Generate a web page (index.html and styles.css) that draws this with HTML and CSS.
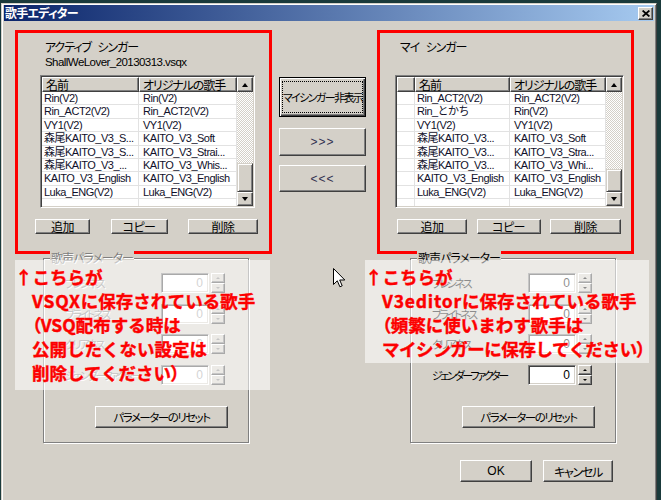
FILE: index.html
```html
<!DOCTYPE html>
<html lang="ja">
<head>
<meta charset="utf-8">
<title>歌手エディター</title>
<link rel="stylesheet" href="styles.css">
</head>
<body>
<div class="window">
  <div class="titlebar">
    <span class="title">歌手エディター</span>
    <span class="close"><svg width="8" height="7" viewBox="0 0 8 7"><path d="M0.6 0.5 L7.4 6.5 M7.4 0.5 L0.6 6.5" stroke="#000" stroke-width="1.7"/></svg></span>
  </div>
  <div class="content">
    <div class="top">
      <section class="panel panel-left">
        <div class="plabel">アクティブ シンガー</div>
        <div class="pfile">ShallWeLover_20130313.vsqx</div>
        <div class="list list-left">
          <div class="cols">
            <div class="hrow"><div class="hcell c1">名前</div><div class="hcell c2">オリジナルの歌手</div></div>
            <div class="row"><div class="cell c1">Rin(V2)</div><div class="cell c2">Rin(V2)</div></div>
            <div class="row"><div class="cell c1">Rin_ACT2(V2)</div><div class="cell c2">Rin_ACT2(V2)</div></div>
            <div class="row"><div class="cell c1">VY1(V2)</div><div class="cell c2">VY1(V2)</div></div>
            <div class="row"><div class="cell c1">森尾KAITO_V3_S...</div><div class="cell c2">KAITO_V3_Soft</div></div>
            <div class="row"><div class="cell c1">森尾KAITO_V3_S...</div><div class="cell c2">KAITO_V3_Strai...</div></div>
            <div class="row"><div class="cell c1">森尾KAITO_V3_...</div><div class="cell c2">KAITO_V3_Whis...</div></div>
            <div class="row"><div class="cell c1">KAITO_V3_English</div><div class="cell c2">KAITO_V3_English</div></div>
            <div class="row"><div class="cell c1">Luka_ENG(V2)</div><div class="cell c2">Luka_ENG(V2)</div></div>
            <div class="row"><div class="cell c1"></div><div class="cell c2"></div></div>
          </div>
          <div class="vscroll">
            <div class="sbtn"><i class="tri-up"></i></div>
            <div class="track"></div>
            <div class="thumb thumb-left"></div>
            <div class="sbtn sdown"><i class="tri-down"></i></div>
          </div>
        </div>
        <div class="brow">
          <div class="btn bl1">追加</div>
          <div class="btn bl2">コピー</div>
          <div class="btn bl3">削除</div>
        </div>
      </section>

      <div class="mid">
        <div class="btn btn-default"><span class="focus">マイシンガー非表示</span></div>
        <div class="btn btn-move1">&gt;&gt;&gt;</div>
        <div class="btn btn-move2">&lt;&lt;&lt;</div>
      </div>

      <section class="panel panel-right">
        <div class="plabel">マイ シンガー</div>
        <div class="pfile"></div>
        <div class="list list-right">
          <div class="cols">
            <div class="hrow"><div class="hcell c0"></div><div class="hcell c1">名前</div><div class="hcell c2">オリジナルの歌手</div></div>
            <div class="row"><div class="cell c0"></div><div class="cell c1">Rin_ACT2(V2)</div><div class="cell c2">Rin_ACT2(V2)</div></div>
            <div class="row"><div class="cell c0"></div><div class="cell c1">Rin_とかち</div><div class="cell c2">Rin(V2)</div></div>
            <div class="row"><div class="cell c0"></div><div class="cell c1">VY1(V2)</div><div class="cell c2">VY1(V2)</div></div>
            <div class="row"><div class="cell c0"></div><div class="cell c1">森尾KAITO_V3...</div><div class="cell c2">KAITO_V3_Soft</div></div>
            <div class="row"><div class="cell c0"></div><div class="cell c1">森尾KAITO_V3...</div><div class="cell c2">KAITO_V3_Stra...</div></div>
            <div class="row"><div class="cell c0"></div><div class="cell c1">森尾KAITO_V3...</div><div class="cell c2">KAITO_V3_Whi...</div></div>
            <div class="row"><div class="cell c0"></div><div class="cell c1">KAITO_V3_English</div><div class="cell c2">KAITO_V3_English</div></div>
            <div class="row"><div class="cell c0"></div><div class="cell c1">Luka_ENG(V2)</div><div class="cell c2">Luka_ENG(V2)</div></div>
            <div class="row"><div class="cell c0"></div><div class="cell c1"></div><div class="cell c2"></div></div>
          </div>
          <div class="vscroll">
            <div class="sbtn"><i class="tri-up"></i></div>
            <div class="track"></div>
            <div class="thumb thumb-right"></div>
            <div class="sbtn sdown"><i class="tri-down"></i></div>
          </div>
        </div>
        <div class="brow brow-right">
          <div class="btn br1">追加</div>
          <div class="btn br2">コピー</div>
          <div class="btn br3">削除</div>
        </div>
      </section>
    </div>

    <div class="groups">
      <div class="group disabled">
        <span class="glabel">歌声パラメーター</span>
        <div class="prow"><span class="plab">ブレシネス</span><span class="num">0</span><span class="spin"><i class="su"></i><i class="sd"></i></span></div>
        <div class="prow"><span class="plab">ブライトネス</span><span class="num">0</span><span class="spin"><i class="su"></i><i class="sd"></i></span></div>
        <div class="prow"><span class="plab">クリアネス</span><span class="num">0</span><span class="spin"><i class="su"></i><i class="sd"></i></span></div>
        <div class="prow"><span class="plab">ジェンダーファクター</span><span class="num">0</span><span class="spin"><i class="su"></i><i class="sd"></i></span></div>
        <div class="btn reset">パラメーターのリセット</div>
      </div>
      <div class="group">
        <span class="glabel">歌声パラメーター</span>
        <div class="prow"><span class="plab">ブレシネス</span><span class="num">0</span><span class="spin"><i class="su"></i><i class="sd"></i></span></div>
        <div class="prow"><span class="plab">ブライトネス</span><span class="num">0</span><span class="spin"><i class="su"></i><i class="sd"></i></span></div>
        <div class="prow"><span class="plab">クリアネス</span><span class="num">0</span><span class="spin"><i class="su"></i><i class="sd"></i></span></div>
        <div class="prow"><span class="plab">ジェンダーファクター</span><span class="num">0</span><span class="spin"><i class="su"></i><i class="sd"></i></span></div>
        <div class="btn reset">パラメーターのリセット</div>
      </div>
    </div>

    <div class="foot">
      <div class="btn btn-ok">OK</div>
      <div class="btn btn-cancel">キャンセル</div>
    </div>
  </div>

  <div class="note note-left">
    <div class="nl">↑こちらが</div>
    <div class="nl ind"><span class="lat">VSQX</span>に保存されている歌手</div>
    <div class="nl ind"><span class="pp">（</span>VSQ配布する時は</div>
    <div class="nl ind">公開したくない設定は</div>
    <div class="nl ind">削除してください<span class="pp">）</span></div>
  </div>
  <div class="note note-right">
    <div class="nl">↑こちらが</div>
    <div class="nl ind"><span class="lat">V3editor</span>に保存されている歌手</div>
    <div class="nl ind"><span class="pp">（</span>頻繁に使いまわす歌手は</div>
    <div class="nl ind tight">マイシンガーに保存してください<span class="pp">）</span></div>
  </div>

  <svg class="cursor" width="13" height="20" viewBox="0 0 13 20"><path d="M0.5 0.5 V16.5 L4.3 12.8 L6.9 18.8 L9.2 17.8 L6.7 12 H11.8 Z" fill="#fff" stroke="#000" stroke-width="1" stroke-linejoin="miter"/></svg>
</div>
</body>
</html>
```
FILE: styles.css
```css
* { box-sizing: border-box; }
html, body { margin: 0; padding: 0; }
body {
  width: 661px;
  height: 500px;
  overflow: hidden;
  background: #1a3a3b;
  font-family: "Liberation Sans", "Noto Sans CJK JP", sans-serif;
  font-size: 12px;
  color: #000;
}

.window {
  position: relative;
  margin: 3px 0 0 1px;
  width: 656px;
  height: 510px;
  background: #d4d0c8;
  border: 1px solid;
  border-color: #d4d0c8 #404040 #404040 #d4d0c8;
  box-shadow: inset 1px 1px #fff, inset -1px -1px #808080;
  padding: 1px 2px 2px 2px;
}

/* title bar */
.titlebar {
  height: 16px;
  display: flex;
  align-items: center;
  justify-content: space-between;
  background: linear-gradient(90deg, #0a246a 0%, #a6caf0 100%);
  padding: 0 1px 0 1px;
}
.title {
  color: #fff;
  font-family: "Noto Sans CJK JP", sans-serif;
  font-weight: 700;
  font-size: 12px;
  line-height: 16px;
  letter-spacing: -0.8px;
  font-feature-settings: "palt";
}
.close {
  width: 15px;
  height: 13px;
  background: #d4d0c8;
  border: 1px solid;
  border-color: #fff #404040 #404040 #fff;
  box-shadow: inset -1px -1px #808080;
  display: flex;
  align-items: center;
  justify-content: center;
}

/* generic classic widgets */
.btn {
  background: #d4d0c8;
  border: 1px solid;
  border-color: #fff #404040 #404040 #fff;
  box-shadow: inset -1px -1px #808080;
  display: flex;
  align-items: center;
  justify-content: center;
  font-family: "Noto Sans CJK JP", sans-serif;
  font-feature-settings: "palt";
  font-size: 12px;
  letter-spacing: -0.6px;
  color: #000;
  white-space: nowrap;
}

.content { padding: 9px 0 0 11px; }
.top { display: flex; align-items: flex-start; }

.panel {
  width: 257px;
  height: 224px;
  border: 3px solid #fd0000;
  padding-top: 6px;
}
.plabel, .pfile {
  height: 15px;
  line-height: 15px;
  white-space: nowrap;
}
.plabel {
  font-family: "Noto Sans CJK JP", sans-serif;
  font-feature-settings: "palt";
  letter-spacing: -1.1px;
  word-spacing: 5px;
}
.pfile { margin-top: 1px; font-size: 11.5px; letter-spacing: -0.55px; }
.panel-left .plabel, .panel-left .pfile { margin-left: 27px; }
.panel-right .plabel { margin-left: 20px; }

/* list view */
.list {
  width: 215px;
  height: 133px;
  margin-top: 5px;
  display: flex;
  background: #fff;
  border: 1px solid;
  border-color: #808080 #fff #fff #808080;
  box-shadow: inset 1px 1px #404040, inset -1px -1px #d4d0c8;
  padding: 1px;
}
.list-left { margin-left: 22px; }
.list-right { margin-left: 15px; width: 229px; }
.cols { flex: 1; display: flex; flex-direction: column; overflow: hidden; }
.hrow { display: flex; height: 15px; flex: none; }
.hcell {
  background: #d4d0c8;
  border: 1px solid;
  border-color: #fff #404040 #404040 #fff;
  box-shadow: inset -1px -1px #808080;
  font-family: "Noto Sans CJK JP", sans-serif;
  font-feature-settings: "palt";
  letter-spacing: -1.1px;
  line-height: 13px;
  padding-left: 3px;
  white-space: nowrap;
  overflow: hidden;
}
.row { display: flex; height: 13.4px; flex: none; }
.cell {
  border-right: 1px solid #e2e2e2;
  border-bottom: 1px solid #e2e2e2;
  padding-left: 2px;
  font-size: 11px;
  letter-spacing: -0.5px;
  line-height: 12.4px;
  white-space: nowrap;
  overflow: hidden;
  color: #10102a;
}
.cell.c2 { padding-left: 4px; }
.list-left .c1 { width: 97px; }
.list-left .c2 { width: 98px; }
.list-right .c0 { width: 18px; }
.list-right .c1 { width: 95px; }
.list-right .c2 { width: 96px; }

.vscroll { width: 16px; display: flex; flex-direction: column; flex: none; }
.sbtn {
  height: 15px;
  background: #d4d0c8;
  border: 1px solid;
  border-color: #fff #404040 #404040 #fff;
  box-shadow: inset -1px -1px #808080;
  display: flex;
  align-items: center;
  justify-content: center;
  flex: none;
}
.sbtn.sdown { height: 14px; }
.tri-up, .tri-down { display: block; width: 0; height: 0; border-left: 3.5px solid transparent; border-right: 3.5px solid transparent; }
.tri-up { border-bottom: 4px solid #000; }
.tri-down { border-top: 4px solid #000; }
.track {
  flex: 1;
  background: repeating-conic-gradient(#ffffff 0 25%, #d4d0c8 0 50%) 0 0 / 2px 2px;
}
.thumb {
  flex: none;
  background: #d4d0c8;
  border: 1px solid;
  border-color: #d4d0c8 #404040 #404040 #d4d0c8;
  box-shadow: inset 1px 1px #fff, inset -1px -1px #808080;
}
.thumb-left { height: 29px; }
.thumb-right { height: 23px; }

.brow {
  display: flex;
  justify-content: space-between;
  margin: 11px 0 0 17px;
  width: 223px;
}
.brow-right { width: 224px; }
.brow .btn { height: 15px; }
.bl1 { width: 55px; }
.bl2 { width: 57px; }
.bl3 { width: 70px; }
.br1 { width: 70px; }
.br2 { width: 64px; }
.br3 { width: 71px; }

/* middle buttons */
.mid {
  width: 87px;
  margin: 47px 0 0 7px;
  display: flex;
  flex-direction: column;
}
.btn-default {
  height: 40px;
  border: 1px solid #000;
  box-shadow: inset 1px 1px #fff, inset -1px -1px #404040, inset -2px -2px #808080;
  padding: 3px;
  font-size: 11px;
  letter-spacing: -1.6px;
}
.focus {
  flex: 1;
  align-self: stretch;
  display: flex;
  align-items: center;
  justify-content: center;
  border: 1px dotted #000;
}
.btn-move1 { height: 28px; margin-top: 11px; font-family: "Liberation Sans", sans-serif; letter-spacing: 1px; color: #303050; }
.btn-move2 { height: 27px; margin-top: 9px; font-family: "Liberation Sans", sans-serif; letter-spacing: 1px; color: #303050; }
.panel-right { margin-left: 11px; }

/* parameter groups */
.groups {
  display: flex;
  gap: 161px;
  margin: 4px 0 0 28px;
}
.group {
  position: relative;
  width: 206px;
  height: 185px;
  border: 1px solid #808080;
  box-shadow: inset 1px 1px #fff, 1px 1px #fff;
  padding: 14px 0 0 21px;
}
.glabel {
  position: absolute;
  top: -8px;
  left: 6px;
  padding: 0 1px;
  background: #d4d0c8;
  font-family: "Noto Sans CJK JP", sans-serif;
  font-feature-settings: "palt";
  letter-spacing: -1px;
  line-height: 14px;
}
.prow { display: flex; align-items: center; height: 20px; }
.prow + .prow { margin-top: 10.6px; }
.plab {
  width: 96px;
  font-family: "Noto Sans CJK JP", sans-serif;
  font-feature-settings: "palt";
  font-size: 11px;
  letter-spacing: -2.3px;
  white-space: nowrap;
}
.num {
  width: 48px;
  height: 20px;
  background: #fff;
  border: 1px solid;
  border-color: #808080 #fff #fff #808080;
  box-shadow: inset 1px 1px #404040, inset -1px -1px #d4d0c8;
  text-align: right;
  padding-right: 5px;
  line-height: 18px;
  font-family: "Liberation Sans", sans-serif;
  font-size: 12px;
}
.spin { width: 14px; height: 20px; margin-left: 2px; display: flex; flex-direction: column; justify-content: space-between; }
.spin i {
  display: flex;
  align-items: center;
  justify-content: center;
  height: 10px;
  background: #d4d0c8;
  border: 1px solid;
  border-color: #fff #404040 #404040 #fff;
  box-shadow: inset -1px -1px #808080;
}
.spin i::before {
  content: "";
  width: 0;
  height: 0;
  border-left: 2px solid transparent;
  border-right: 2px solid transparent;
}
.spin .su::before { border-bottom: 2px solid #000; }
.spin .sd::before { border-top: 2px solid #000; }
.disabled .plab, .disabled .glabel { color: #808080; text-shadow: 1px 1px 0 #fff; }
.disabled .num { color: #a0a0a0; }
.disabled .spin .su::before { border-bottom-color: #808080; }
.disabled .spin .sd::before { border-top-color: #808080; }
.reset {
  width: 133px;
  height: 22px;
  margin: 21px 0 0 30px;
  font-size: 11.5px;
  letter-spacing: -1.5px;
}

.foot {
  display: flex;
  justify-content: flex-end;
  gap: 11px;
  margin-top: 17px;
  padding-right: 41px;
}
.btn-ok { width: 72px; height: 22px; font-family: "Liberation Sans", sans-serif; letter-spacing: 0; }
.btn-cancel { width: 70px; height: 22px; letter-spacing: -1.3px; }

/* annotation overlays */
.note {
  position: absolute;
  top: 256px;
  background: rgba(255, 255, 255, 0.55);
  color: #fd0000;
  font-family: "Noto Sans CJK JP", sans-serif;
  font-weight: 700;
  font-size: 17.5px;
  line-height: 24px;
  padding-top: 5px;
  white-space: nowrap;
  -webkit-text-stroke: 0.4px #fd0000;
}
.note-left { left: 13px; width: 255px; height: 130px; }
.note-right { left: 363px; width: 284px; height: 103px; }
.nl.ind { padding-left: 17px; }
.nl.tight { letter-spacing: -0.45px; }
.lat { letter-spacing: 0.8px; }
.pp { font-feature-settings: "palt"; }

.cursor { position: absolute; left: 331px; top: 264px; }
```
